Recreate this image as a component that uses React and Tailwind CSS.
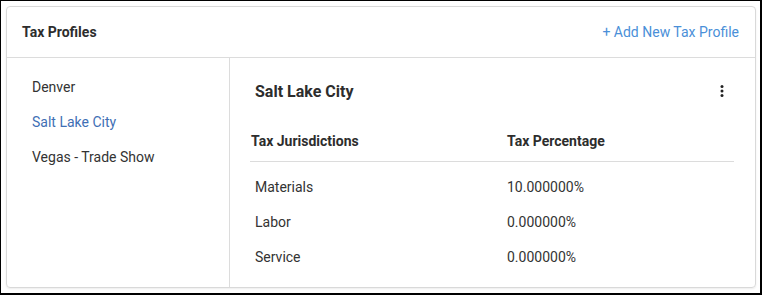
export default function App() {
  const profiles = ["Denver", "Salt Lake City", "Vegas - Trade Show"];
  const selected = "Salt Lake City";

  const rows = [
    { name: "Materials", pct: "10.000000%" },
    { name: "Labor", pct: "0.000000%" },
    { name: "Service", pct: "0.000000%" },
  ];

  return (
    <div
      className="w-[762px] h-[295px] bg-white border-l border-t border-r-2 border-b-2 border-black p-[5px] text-[#333]"
      style={{ fontFamily: "Roboto, 'Liberation Sans', sans-serif" }}
    >
      <div className="h-[282px] w-[750px] rounded border border-[#d9d9d9] shadow-[0_1px_2px_rgba(0,0,0,0.08)] flex flex-col">
        {/* header */}
        <div className="h-[51px] shrink-0 flex items-center justify-between pl-[15px] pr-[16px] border-b border-[#dcdcdc]">
          <span className="text-[14px] font-bold text-[#2d2d2d]">Tax Profiles</span>
          <span className="text-[14px] text-[#4a8fd8]">+ Add New Tax Profile</span>
        </div>

        <div className="flex flex-1 min-h-0">
          {/* profile list */}
          <div className="w-[223px] shrink-0 border-r border-[#dcdcdc] pt-[19px] pl-[25px] flex flex-col">
            {profiles.map((p) => (
              <div
                key={p}
                className={
                  "h-[35px] text-[14px] " +
                  (p === selected ? "text-[#3f6fb5]" : "text-[#333]")
                }
              >
                {p}
              </div>
            ))}
          </div>

          {/* details */}
          <div className="flex-1 pl-[20px] pr-[21px]">
            <div className="flex items-center justify-between pt-[22px] pl-[5px] pr-[10px]">
              <span className="text-[16px] font-bold text-[#2d2d2d]">{selected}</span>
              <svg width="4" height="12" viewBox="0 0 4 12" className="text-[#222] -mt-[2px]">
                <circle cx="2" cy="1.5" r="1.5" fill="currentColor" />
                <circle cx="2" cy="6" r="1.5" fill="currentColor" />
                <circle cx="2" cy="10.5" r="1.5" fill="currentColor" />
              </svg>
            </div>

            <div className="mt-[27px] flex h-[31px] items-start border-b border-[#dcdcdc] text-[14px] font-bold text-[#2d2d2d]">
              <span className="w-[257px] pl-[1px]">Tax Jurisdictions</span>
              <span>Tax Percentage</span>
            </div>

            <div className="pt-[15px]">
              {rows.map((r) => (
                <div key={r.name} className="flex h-[35px] text-[14px] text-[#333]">
                  <span className="w-[257px] pl-[5px]">{r.name}</span>
                  <span>{r.pct}</span>
                </div>
              ))}
            </div>
          </div>
        </div>
      </div>
    </div>
  );
}
